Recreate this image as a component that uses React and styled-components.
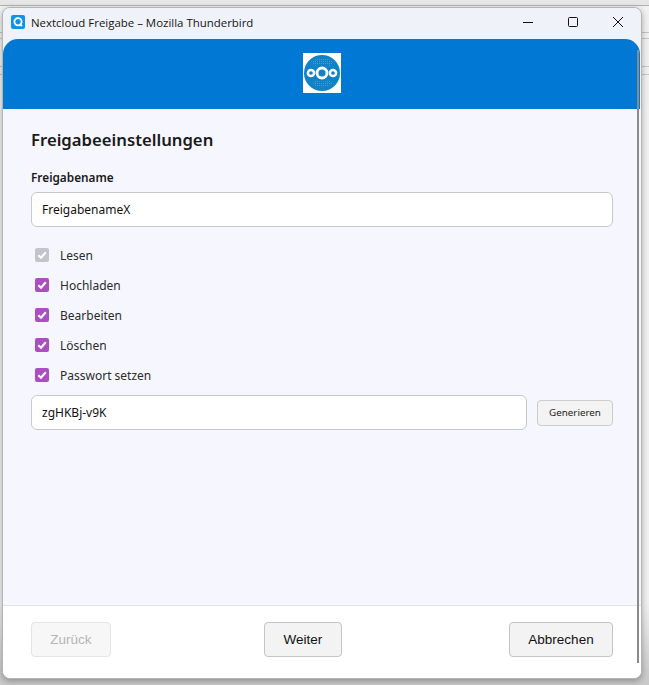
import React from 'react'
import styled, { createGlobalStyle } from 'styled-components'

const GlobalStyle = createGlobalStyle`
    html, body{
        margin: 0;
        padding: 0;
        background: #e9e9e9;
    }
    *{
        box-sizing: border-box;
    }
`

// the thin lines are the window that sits behind the dialog
const hairline = (y, colour) => `linear-gradient(${colour}, ${colour}) 0 ${y}px / 100% 1px no-repeat`

const Desktop = styled.div`
    width: 649px;
    height: 685px;
    padding: 7px 7px 6px 2px;
    overflow: hidden;
    background:
        ${hairline(5, '#b2b2b2')},
        ${hairline(32, '#c4c4c4')},
        ${hairline(38, '#c4c4c4')},
        ${hairline(66, '#c4c4c4')},
        ${hairline(74, '#c4c4c4')},
        linear-gradient(#e6e6e6 5px, #f1f1f1 6px, #f1f1f1 88%, #c9c9c9 99%);
`

const Window = styled.div`
    width: 640px;
    height: 672px;
    display: flex;
    flex-direction: column;
    position: relative;
    background: #eff3f9;
    border: 1px solid #b4b4b4;
    border-radius: 8px;
    box-shadow: 0 2px 6px rgba(0,0,0,0.3);
    overflow: hidden;
`

const TitleBar = styled.div`
    height: 31px;
    flex: none;
    display: flex;
    align-items: center;
    padding: 0 1px 3px 8px;
    background: #eff3f9;
`

const AppIcon = styled.svg`
    width: 14px;
    height: 14px;
    margin-right: 6px;
`

const WindowTitle = styled.div`
    flex: 1;
    font: 11.45px "Open Sans", "Noto Sans", sans-serif;
    color: #141414;
`

const Controls = styled.div`
    display: flex;
    height: 100%;
`

const Control = styled.div`
    width: 45px;
    display: flex;
    align-items: center;
    justify-content: center;
    svg{
        width: 12px;
        height: 12px;
    }
`

const Header = styled.div`
    height: 70px;
    flex: none;
    display: flex;
    align-items: center;
    justify-content: center;
    padding-bottom: 2px;
    margin-right: 1px;
    background: #0078d4;
    border-radius: 15px 15px 0 0;
`

const Logo = styled.svg`
    width: 38px;
    height: 40px;
    display: block;
`

const Content = styled.div`
    flex: 1;
    padding: 18px 28px 0 28px;
    background: #f6f7fe;
`

const Heading = styled.h1`
    margin: 0 0 15px 0;
    font: 600 16.7px/26px "Noto Sans", sans-serif;
    color: #1a1a1a;
`

const FieldLabel = styled.div`
    margin-bottom: 6px;
    font: 600 11.8px/18px "Noto Sans", sans-serif;
    color: #1a1a1a;
`

const TextInput = styled.div`
    height: 35px;
    flex: ${p => (p.$grow ? 1 : 'none')};
    display: flex;
    align-items: center;
    padding-left: 10px;
    background: #ffffff;
    border: 1px solid #c8c8cc;
    border-radius: 6px;
    font: 12px "Noto Sans", sans-serif;
    color: #111111;
`

const CheckList = styled.div`
    display: flex;
    flex-direction: column;
    gap: 10px;
    padding: 18px 0 10px 4px;
`

const CheckRow = styled.div`
    height: 20px;
    display: flex;
    align-items: center;
    gap: 11px;
    font: 12px "Noto Sans", sans-serif;
    color: #2b2b2b;
`

const Box = styled.div`
    width: 14px;
    height: 14px;
    display: flex;
    align-items: center;
    justify-content: center;
    border-radius: 2px;
    background: ${p => (p.$disabled ? '#c3c3cb' : '#ab4fc0')};
    svg{
        width: 10px;
        height: 10px;
    }
`

const PasswordRow = styled.div`
    display: flex;
    align-items: center;
    gap: 10px;
`

const SmallButton = styled.div`
    width: 76px;
    height: 26px;
    display: flex;
    align-items: center;
    justify-content: center;
    background: #f3f3f3;
    border: 1px solid #cbcbcb;
    border-radius: 4px;
    font: 9.8px "Noto Sans", sans-serif;
    color: #222222;
`

const Footer = styled.div`
    height: 73px;
    flex: none;
    display: flex;
    align-items: center;
    justify-content: space-between;
    padding: 0 28px 6px 28px;
    background: #ffffff;
    border-top: 1px solid #e2e2e6;
`

const Button = styled.div`
    width: ${p => p.$width}px;
    height: 35px;
    margin-right: ${p => p.$offset || 0}px;
    display: flex;
    align-items: center;
    justify-content: center;
    background: ${p => (p.$disabled ? '#f7f7f7' : '#f3f3f3')};
    border: 1px solid ${p => (p.$disabled ? '#e4e4e4' : '#c4c4c4')};
    border-radius: 4px;
    font: 13.5px "Liberation Sans", sans-serif;
    color: ${p => (p.$disabled ? '#b5b5b5' : '#111111')};
`

const Scrollbar = styled.div`
    position: absolute;
    top: 42px;
    right: 2px;
    bottom: 15px;
    width: 2px;
    background: #8b8b8b;
`

const Check = () => (
    <svg viewBox="0 0 10 10">
        <path d="M1.3 5.2 L4 7.8 L8.8 2.3" fill="none" stroke="#ffffff" strokeWidth="2.1" />
    </svg>
)

const items = ['Hochladen', 'Bearbeiten', 'Löschen', 'Passwort setzen']

const App = () => {
    return (
        <Desktop>
            <GlobalStyle />
            <Window>
                <TitleBar>
                    <AppIcon viewBox="0 0 14 14">
                        <rect width="14" height="14" rx="2" fill="#0a95e8" />
                        <circle cx="7" cy="6.8" r="3.6" fill="none" stroke="#ffffff" strokeWidth="1.8" />
                        <path d="M8.6 9 L11 11.2" stroke="#ffffff" strokeWidth="1.8" />
                    </AppIcon>
                    <WindowTitle>Nextcloud Freigabe – Mozilla Thunderbird</WindowTitle>
                    <Controls>
                        <Control>
                            <svg viewBox="0 0 12 12"><path d="M1 6.5 H11" stroke="#111" strokeWidth="1" /></svg>
                        </Control>
                        <Control>
                            <svg viewBox="0 0 12 12"><rect x="1.5" y="1.5" width="9" height="9" rx="1" fill="none" stroke="#111" /></svg>
                        </Control>
                        <Control>
                            <svg viewBox="0 0 12 12"><path d="M1 1 L11 11 M11 1 L1 11" stroke="#111" strokeWidth="1" /></svg>
                        </Control>
                    </Controls>
                </TitleBar>
                <Header>
                    <Logo viewBox="0 0 38 40">
                        <defs>
                            <pattern id="dots" width="2" height="2" patternUnits="userSpaceOnUse">
                                <rect width="1" height="1" fill="#5fb0e0" />
                            </pattern>
                        </defs>
                        <rect width="38" height="40" fill="#ffffff" />
                        <circle cx="19" cy="20" r="18" fill="#0f82c8" />
                        <path d="M8 9 Q19 1 31 9 L27 13 Q19 9 12 13 Z" fill="url(#dots)" opacity="0.6" />
                        <path d="M9 31 Q19 38 30 30 L26 27 Q19 31 13 27 Z" fill="url(#dots)" opacity="0.6" />
                        <circle cx="19" cy="20" r="5" fill="none" stroke="#ffffff" strokeWidth="2.8" />
                        <circle cx="8" cy="20" r="3.1" fill="none" stroke="#ffffff" strokeWidth="2.5" />
                        <circle cx="30" cy="20" r="3.1" fill="none" stroke="#ffffff" strokeWidth="2.5" />
                    </Logo>
                </Header>
                <Content>
                    <Heading>Freigabeeinstellungen</Heading>
                    <FieldLabel>Freigabename</FieldLabel>
                    <TextInput>FreigabenameX</TextInput>
                    <CheckList>
                        <CheckRow>
                            <Box $disabled><Check /></Box>
                            Lesen
                        </CheckRow>
                        {items.map(item => (
                            <CheckRow key={item}>
                                <Box><Check /></Box>
                                {item}
                            </CheckRow>
                        ))}
                    </CheckList>
                    <PasswordRow>
                        <TextInput $grow>zgHKBj-v9K</TextInput>
                        <SmallButton>Generieren</SmallButton>
                    </PasswordRow>
                </Content>
                <Footer>
                    <Button $width={80} $disabled>Zurück</Button>
                    <Button $width={78} $offset={14}>Weiter</Button>
                    <Button $width={104}>Abbrechen</Button>
                </Footer>
                <Scrollbar />
            </Window>
        </Desktop>
    )
}

export default App
